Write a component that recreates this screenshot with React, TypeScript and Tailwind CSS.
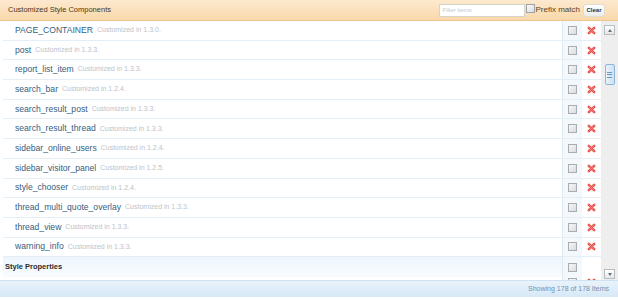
import React from "react"

const items = [
  { name: "PAGE_CONTAINER", version: "1.3.0" },
  { name: "post", version: "1.3.3" },
  { name: "report_list_item", version: "1.3.3" },
  { name: "search_bar", version: "1.2.4" },
  { name: "search_result_post", version: "1.3.3" },
  { name: "search_result_thread", version: "1.3.3" },
  { name: "sidebar_online_users", version: "1.2.4" },
  { name: "sidebar_visitor_panel", version: "1.2.5" },
  { name: "style_chooser", version: "1.2.4" },
  { name: "thread_multi_quote_overlay", version: "1.3.3" },
  { name: "thread_view", version: "1.3.3" },
  { name: "warning_info", version: "1.3.3" },
]

function Checkbox() {
  return <span className="block h-[9px] w-[9px] border border-[#a9adb2] bg-gradient-to-br from-[#f7f7f7] to-[#d9dbdd]" />
}

function DeleteIcon() {
  return (
    <svg width="9" height="9" viewBox="0 0 10 10">
      <path d="M2 2 L8 8 M8 2 L2 8" stroke="#e8504a" strokeWidth="2.8" strokeLinecap="round" />
      <path d="M2.3 2.3 L7.7 7.7 M7.7 2.3 L2.3 7.7" stroke="#f58a84" strokeWidth="0.9" strokeLinecap="round" />
    </svg>
  )
}

function Row({ name, version }: { name: string; version: string }) {
  return (
    <div className="flex h-[19.7px] border-b border-[#e3eef6]">
      <div className="flex flex-1 items-center pl-[12px] bg-white">
        <span className="text-[8.6px] text-[#34607f]">{name}</span>
        <span className="ml-[4px] text-[7px] text-[#bcc3ca]">Customized in {version}.</span>
      </div>
      <div className="flex w-[20px] items-center justify-center border-l border-[#dde9f2] bg-[#f2f8fc]">
        <Checkbox />
      </div>
      <div className="flex w-[19px] items-center justify-center bg-white">
        <DeleteIcon />
      </div>
    </div>
  )
}

export default function App() {
  return (
    <div className="h-[300px] w-[618px] bg-white font-['Liberation_Sans',Arial,sans-serif]">
      <div className="flex h-[21px] items-center border-b border-[#efc58e] bg-gradient-to-b from-[#fde9cf] to-[#f9d8ab] pl-[8px] pr-[13px]">
        <span className="flex-1 text-[7.5px] text-[#4a3618]">Customized Style Components</span>
        <div className="flex h-[13px] w-[86px] items-center border border-[#d9d2c6] bg-white px-[3px] text-[6px] text-[#c3c9d0]">
          Filter items
        </div>
        <div className="ml-[1px] flex items-center">
          <span className="mb-[3px] block h-[9px] w-[9px] border border-[#9ea3a8] bg-gradient-to-br from-[#fafafa] to-[#dcdcdc]" />
          <span className="ml-[1px] text-[8px] text-[#5a4320]">Prefix match</span>
        </div>
        <div className="ml-[3px] flex h-[13px] w-[22px] items-center justify-center rounded-[3px] border border-[#e3dccf] bg-gradient-to-b from-[#ffffff] to-[#ebebeb] text-[6px] font-bold text-[#333]">
          Clear
        </div>
      </div>

      <div className="flex h-[259px]">
        <div className="flex-1 overflow-hidden pl-[3px]">
          {items.map((it) => (
            <Row key={it.name} name={it.name} version={it.version} />
          ))}
          <div className="flex h-[19.7px]">
            <div className="flex flex-1 items-center bg-gradient-to-b from-[#eef6fc] to-[#f8fbfe] pl-[2px]">
              <span className="text-[7.5px] font-bold text-[#2b2b2b]">Style Properties</span>
            </div>
            <div className="flex w-[20px] items-center justify-center border-l border-[#dde9f2] bg-[#f2f8fc]">
              <Checkbox />
            </div>
            <div className="w-[19px] bg-white" />
          </div>
          <div className="flex h-[20px]">
            <div className="flex-1 bg-white" />
            <div className="flex w-[20px] justify-center border-l border-[#dde9f2] bg-[#f2f8fc] pt-[1px]">
              <Checkbox />
            </div>
            <div className="flex w-[19px] justify-center bg-white pt-[1px]">
              <DeleteIcon />
            </div>
          </div>
        </div>

        <div className="flex w-[17px] flex-col items-center bg-[#eeeeee] pt-[4px]">
          <div className="flex h-[10px] w-[11px] items-center justify-center border border-[#b7bcc1] bg-gradient-to-b from-white to-[#e4e6e8]">
            <span className="h-0 w-0 border-x-[2.5px] border-b-[3px] border-x-transparent border-b-[#6a6f74]" />
          </div>
          <div className="mt-[29px] flex h-[21px] w-[10px] flex-col items-center justify-center gap-[1.5px] rounded-[2px] border border-[#8fb5d8] bg-gradient-to-r from-[#e8f2fb] to-[#cfe2f3]">
            <span className="h-px w-[5px] bg-[#6b96bd]" />
            <span className="h-px w-[5px] bg-[#6b96bd]" />
            <span className="h-px w-[5px] bg-[#6b96bd]" />
          </div>
          <div className="mt-auto mb-[1px] flex h-[10px] w-[11px] items-center justify-center border border-[#b7bcc1] bg-gradient-to-b from-white to-[#e4e6e8]">
            <span className="h-0 w-0 border-x-[2.5px] border-t-[3px] border-x-transparent border-t-[#6a6f74]" />
          </div>
        </div>
      </div>

      <div className="flex h-[17px] items-center justify-end border-t border-[#cfe2f1] bg-gradient-to-b from-[#e9f3fb] to-[#d6e8f6] pr-[9px]">
        <span className="text-[7px] text-[#6f93b5]">Showing 178 of 178 Items</span>
      </div>
    </div>
  )
}
